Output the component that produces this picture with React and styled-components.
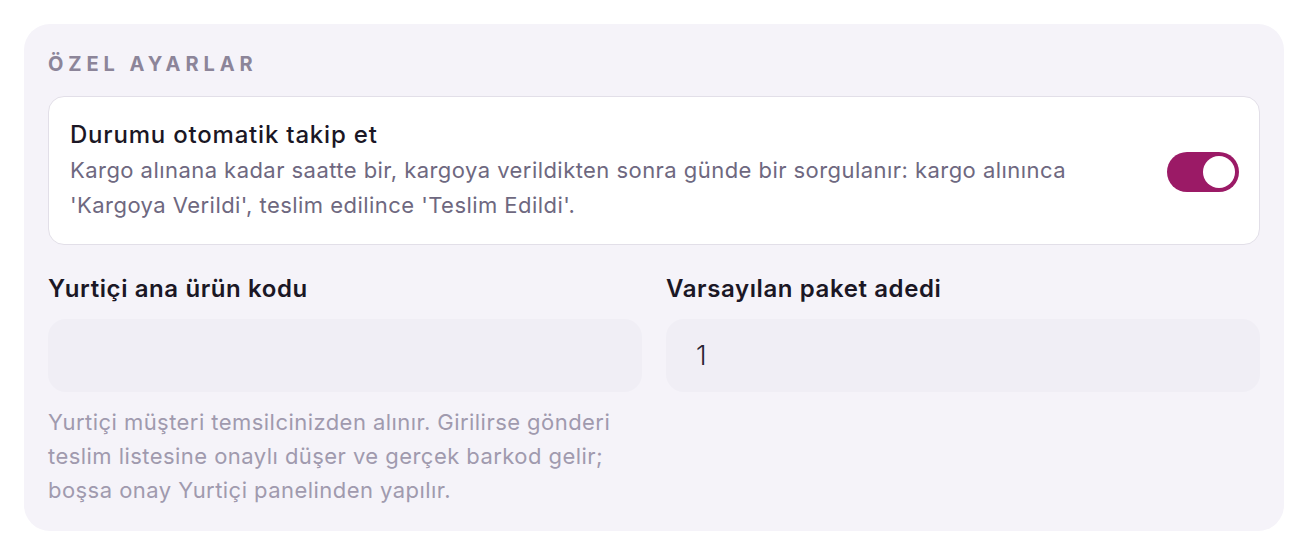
import React from 'react';
import styled, { createGlobalStyle } from 'styled-components';

const GlobalStyle = createGlobalStyle`
  * { box-sizing: border-box; }
  body {
    margin: 0;
    background: #ffffff;
    font-family: Inter, "Noto Sans", sans-serif;
  }
`;

const Page = styled.div`
  padding: 24px;
`;

const Panel = styled.section`
  background: #f5f3f9;
  border-radius: 26px;
  padding: 28px 24px 24px;
`;

const SectionTitle = styled.h2`
  margin: 0 0 20px;
  font-size: 20px;
  font-weight: 700;
  letter-spacing: 4.9px;
  color: #8c8599;
  line-height: 24px;
`;

const ToggleCard = styled.div`
  display: flex;
  align-items: center;
  justify-content: space-between;
  gap: 40px;
  background: #ffffff;
  border: 1.5px solid #e2dfe8;
  border-radius: 16px;
  padding: 23px 20px 21px 21px;
`;

const ToggleText = styled.div`
  display: flex;
  flex-direction: column;
`;

const ToggleTitle = styled.div`
  font-size: 24px;
  font-weight: 500;
  color: #1b1725;
  line-height: 30px;
  letter-spacing: 0.8px;
  margin-bottom: 3px;
`;

const ToggleDesc = styled.div`
  font-size: 22px;
  color: #6e6880;
  line-height: 35px;
  letter-spacing: 0.45px;
`;

const Switch = styled.button`
  flex: none;
  width: 72px;
  height: 40px;
  border: none;
  border-radius: 20px;
  padding: 4px;
  background: ${p => (p.$on ? '#9b1a66' : '#d5d1dc')};
  display: flex;
  justify-content: ${p => (p.$on ? 'flex-end' : 'flex-start')};
  cursor: pointer;
`;

const Knob = styled.span`
  width: 32px;
  height: 32px;
  border-radius: 50%;
  background: #ffffff;
`;

const FieldGrid = styled.div`
  display: grid;
  grid-template-columns: 1fr 1fr;
  gap: 24px;
  margin-top: 29px;
`;

const Field = styled.div`
  display: flex;
  flex-direction: column;
`;

const Label = styled.label`
  font-size: 24px;
  font-weight: 600;
  color: #1b1725;
  line-height: 30px;
  letter-spacing: 0.6px;
  margin-bottom: 15px;
`;

const Input = styled.input`
  height: 73px;
  border: none;
  outline: none;
  border-radius: 18px;
  background: #f0eef5;
  padding: 0 28px 0 30px;
  font-family: inherit;
  font-size: 27px;
  font-weight: 300;
  color: #2a2533;
`;

const Help = styled.p`
  margin: 13px 0 0;
  font-size: 22px;
  line-height: 34px;
  letter-spacing: 0.45px;
  color: #a09aae;
  max-width: 580px;
`;

export default function App() {
  return (
    <>
      <GlobalStyle />
      <Page>
        <Panel>
          <SectionTitle>ÖZEL AYARLAR</SectionTitle>
          <ToggleCard>
            <ToggleText>
              <ToggleTitle>Durumu otomatik takip et</ToggleTitle>
              <ToggleDesc>
                Kargo alınana kadar saatte bir, kargoya verildikten sonra günde bir sorgulanır: kargo alınınca
                <br />
                'Kargoya Verildi', teslim edilince 'Teslim Edildi'.
              </ToggleDesc>
            </ToggleText>
            <Switch $on aria-label="Durumu otomatik takip et">
              <Knob />
            </Switch>
          </ToggleCard>
          <FieldGrid>
            <Field>
              <Label>Yurtiçi ana ürün kodu</Label>
              <Input defaultValue="" />
              <Help>
                Yurtiçi müşteri temsilcinizden alınır. Girilirse gönderi teslim listesine onaylı düşer ve gerçek barkod gelir; boşsa onay Yurtiçi panelinden yapılır.
              </Help>
            </Field>
            <Field>
              <Label>Varsayılan paket adedi</Label>
              <Input defaultValue="1" />
            </Field>
          </FieldGrid>
        </Panel>
      </Page>
    </>
  );
}
